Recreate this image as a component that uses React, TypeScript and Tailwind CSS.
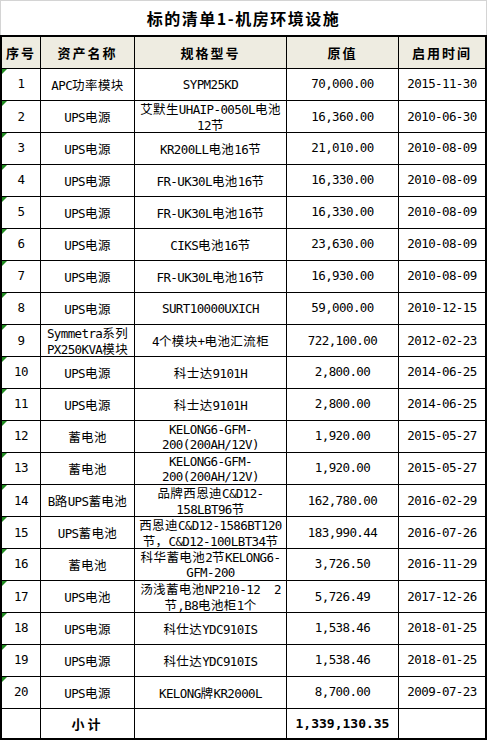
import React from "react";

type Row = {
  no: string;
  name: string[];
  spec: string[];
  value: string;
  date: string;
};

const rows: Row[] = [
  { no: "1", name: ["APC功率模块"], spec: ["SYPM25KD"], value: "70,000.00", date: "2015-11-30" },
  { no: "2", name: ["UPS电源"], spec: ["艾默生UHAIP-0050L电池", "12节"], value: "16,360.00", date: "2010-06-30" },
  { no: "3", name: ["UPS电源"], spec: ["KR200LL电池16节"], value: "21,010.00", date: "2010-08-09" },
  { no: "4", name: ["UPS电源"], spec: ["FR-UK30L电池16节"], value: "16,330.00", date: "2010-08-09" },
  { no: "5", name: ["UPS电源"], spec: ["FR-UK30L电池16节"], value: "16,330.00", date: "2010-08-09" },
  { no: "6", name: ["UPS电源"], spec: ["CIKS电池16节"], value: "23,630.00", date: "2010-08-09" },
  { no: "7", name: ["UPS电源"], spec: ["FR-UK30L电池16节"], value: "16,930.00", date: "2010-08-09" },
  { no: "8", name: ["UPS电源"], spec: ["SURT10000UXICH"], value: "59,000.00", date: "2010-12-15" },
  { no: "9", name: ["Symmetra系列", "PX250KVA模块"], spec: ["4个模块+电池汇流柜"], value: "722,100.00", date: "2012-02-23" },
  { no: "10", name: ["UPS电源"], spec: ["科士达9101H"], value: "2,800.00", date: "2014-06-25" },
  { no: "11", name: ["UPS电源"], spec: ["科士达9101H"], value: "2,800.00", date: "2014-06-25" },
  { no: "12", name: ["蓄电池"], spec: ["KELONG6-GFM-", "200(200AH/12V)"], value: "1,920.00", date: "2015-05-27" },
  { no: "13", name: ["蓄电池"], spec: ["KELONG6-GFM-", "200(200AH/12V)"], value: "1,920.00", date: "2015-05-27" },
  { no: "14", name: ["B路UPS蓄电池"], spec: ["品牌西恩迪C&D12-", "158LBT96节"], value: "162,780.00", date: "2016-02-29" },
  { no: "15", name: ["UPS蓄电池"], spec: ["西恩迪C&D12-1586BT120", "节，C&D12-100LBT34节"], value: "183,990.44", date: "2016-07-26" },
  { no: "16", name: ["蓄电池"], spec: ["科华蓄电池2节KELONG6-", "GFM-200"], value: "3,726.50", date: "2016-11-29" },
  { no: "17", name: ["UPS电池"], spec: ["汤浅蓄电池NP210-12  2", "节,B8电池柜1个"], value: "5,726.49", date: "2017-12-26" },
  { no: "18", name: ["UPS电源"], spec: ["科仕达YDC910IS"], value: "1,538.46", date: "2018-01-25" },
  { no: "19", name: ["UPS电源"], spec: ["科仕达YDC910IS"], value: "1,538.46", date: "2018-01-25" },
  { no: "20", name: ["UPS电源"], spec: ["KELONG牌KR2000L"], value: "8,700.00", date: "2009-07-23" },
];

const cjk = /([\u3000-\u9fff\uff00-\uffef]+)/;

// latin runs stay in the mono font, chinese runs get a slightly bigger cjk face
function Mixed({ s }: { s: string }) {
  const parts = s.split(cjk);
  return (
    <>
      {parts.map((p, i) =>
        i % 2 === 1 ? (
          <span key={i} className="font-['Noto_Sans_CJK_SC'] text-[12.5px] tracking-[0.4px]">
            {p}
          </span>
        ) : (
          p
        )
      )}
    </>
  );
}

function Lines({ lines }: { lines: string[] }) {
  return (
    <div className="flex flex-col items-center leading-[15px]">
      {lines.map((l, i) => (
        <div key={i} className="whitespace-pre">
          <Mixed s={l} />
        </div>
      ))}
    </div>
  );
}

const grid = "grid grid-cols-[39px_94px_152px_112px_86px]";
const cell = "flex items-center justify-center border-r border-black";

export default function App() {
  return (
    <div className="w-[489px] h-[741px] bg-white font-['DejaVu_Sans_Mono','Noto_Sans_CJK_SC',monospace] text-[12.5px] tracking-[-0.6px] text-black">
      <div className="w-[487px] h-[35px] border-t border-l border-r border-[#d4d4d4] flex items-center justify-center">
        <span className="font-['Noto_Sans_CJK_SC',sans-serif] font-bold text-[16px] tracking-[1.5px] leading-none">
          标的清单1-机房环境设施
        </span>
      </div>

      <div className="w-[487px] border-2 border-black">
        <div className={`${grid} h-[32px] border-b border-black bg-[#eeece1] font-['Noto_Sans_CJK_SC',sans-serif] font-bold text-[13px] tracking-[2px]`}>
          <div className={cell}>序号</div>
          <div className={cell}>资产名称</div>
          <div className={cell}>规格型号</div>
          <div className={cell}>原值</div>
          <div className="flex items-center justify-center">启用时间</div>
        </div>

        {rows.map((r) => (
          <div key={r.no} className={`${grid} h-[32px] border-b border-black`}>
            <div className={`${cell} relative`}>
              <div className="absolute left-0 top-0 w-0 h-0 border-t-[5px] border-t-[#1f8a1f] border-r-[5px] border-r-transparent" />
              {r.no}
            </div>
            <div className={cell}>
              <Lines lines={r.name} />
            </div>
            <div className={cell}>
              <Lines lines={r.spec} />
            </div>
            <div className={cell}>{r.value}</div>
            <div className="flex items-center justify-center">{r.date}</div>
          </div>
        ))}

        <div className={`${grid} h-[29px]`}>
          <div className={cell} />
          <div className={`${cell} font-['Noto_Sans_CJK_SC',sans-serif] font-bold text-[13px] tracking-[3px]`}>小计</div>
          <div className={cell} />
          <div className={`${cell} font-bold text-[13px] tracking-[0px]`}>1,339,130.35</div>
          <div />
        </div>
      </div>
    </div>
  );
}
